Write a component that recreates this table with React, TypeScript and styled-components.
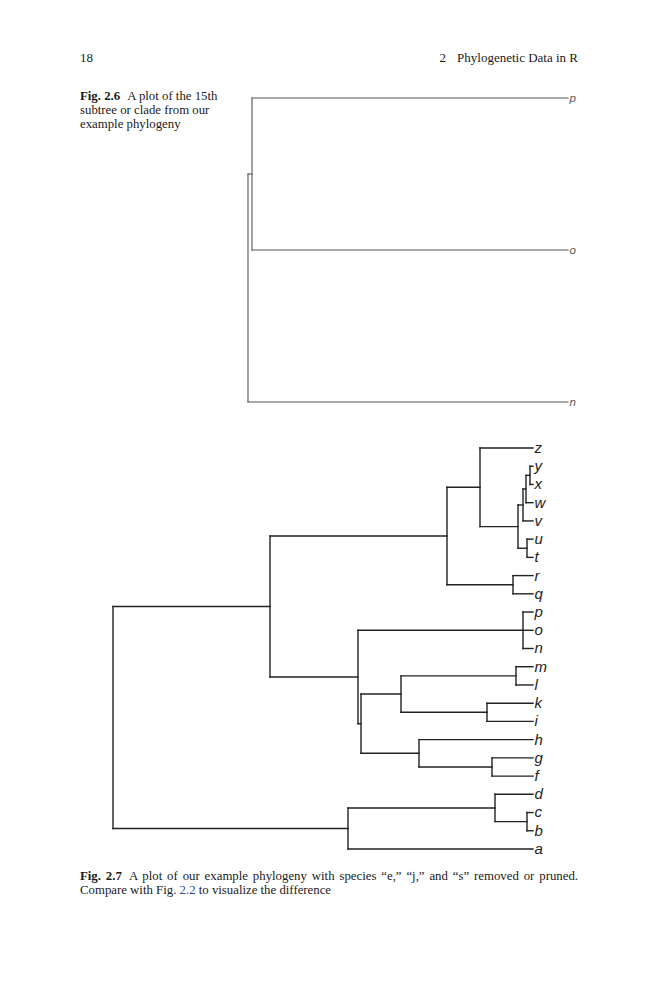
import React from "react";
import styled, { createGlobalStyle } from "styled-components";

const GlobalStyle = createGlobalStyle`
  body {
    margin: 0;
    background: #fff;
  }
`;

const Page = styled.div`
  width: 498px;
  padding: 50px 0 0 80px;
  font-family: "Liberation Serif", "Times New Roman", serif;
  color: #1a1a1a;
`;

const RunningHead = styled.header`
  display: flex;
  justify-content: space-between;
  font-size: 13px;
  line-height: 16px;
`;

const ChapterNo = styled.span`
  margin-right: 11px;
`;

const FigureRow = styled.div`
  display: flex;
  align-items: flex-start;
  margin-top: 23px;
`;

const Caption = styled.p<{ $width?: number; $justify?: boolean }>`
  margin: 0;
  width: ${(p) => (p.$width ? `${p.$width}px` : "auto")};
  flex-shrink: 0;
  font-size: 12.8px;
  line-height: 14px;
  text-align: ${(p) => (p.$justify ? "justify" : "left")};
`;

const FigLabel = styled.b`
  margin-right: 7px;
`;

const CrossRef = styled.span`
  color: #2b4ba3;
`;

const TreeSvg = styled.svg<{ $top?: number; $left?: number }>`
  display: block;
  flex-shrink: 0;
  margin-top: ${(p) => p.$top ?? 0}px;
  margin-left: ${(p) => p.$left ?? 0}px;
`;

const BottomCaption = styled(Caption)`
  margin-top: 9px;
`;

type TreeNode = { name?: string; x?: number; children?: TreeNode[] };

const tip = (name: string): TreeNode => ({ name });
const node = (x: number, children: TreeNode[]): TreeNode => ({ x, children });

interface Seg {
  x1: number;
  y1: number;
  x2: number;
  y2: number;
}

interface Label {
  name: string;
  x: number;
  y: number;
}

// walks the tree: tips get consecutive y slots, inner nodes sit between first and last child
function layoutTree(root: TreeNode, tipX: number, y0: number, step: number) {
  const segs: Seg[] = [];
  const labels: Label[] = [];
  let count = 0;

  const walk = (n: TreeNode): { x: number; y: number } => {
    if (!n.children) {
      const y = y0 + count * step;
      count += 1;
      labels.push({ name: n.name ?? "", x: tipX, y });
      return { x: tipX, y };
    }
    const x = n.x ?? 0;
    const kids = n.children.map(walk);
    const top = kids[0].y;
    const bottom = kids[kids.length - 1].y;
    segs.push({ x1: x, y1: top, x2: x, y2: bottom });
    kids.forEach((k) => segs.push({ x1: x, y1: k.y, x2: k.x, y2: k.y }));
    return { x, y: (top + bottom) / 2 };
  };

  walk(root);
  return { segs, labels };
}

interface PhyloProps {
  tree: TreeNode;
  tipX: number;
  y0: number;
  step: number;
  viewBox: [number, number, number, number];
  stroke: string;
  strokeWidth: number;
  fontSize: number;
  top?: number;
  left?: number;
}

const Phylogeny = ({ tree, tipX, y0, step, viewBox, stroke, strokeWidth, fontSize, top, left }: PhyloProps) => {
  const { segs, labels } = layoutTree(tree, tipX, y0, step);
  return (
    <TreeSvg
      width={viewBox[2]}
      height={viewBox[3]}
      viewBox={viewBox.join(" ")}
      $top={top}
      $left={left}
    >
      <g stroke={stroke} strokeWidth={strokeWidth} strokeLinecap="square" fill="none">
        {segs.map((s, i) => (
          <line key={i} x1={s.x1} y1={s.y1} x2={s.x2} y2={s.y2} />
        ))}
      </g>
      <g
        fill={stroke}
        fontFamily="'Liberation Sans', Arial, sans-serif"
        fontStyle="italic"
        fontSize={fontSize}
      >
        {labels.map((l) => (
          <text key={l.name} x={l.x + 1.5} y={l.y + fontSize * 0.33}>
            {l.name}
          </text>
        ))}
      </g>
    </TreeSvg>
  );
};

const subtree: TreeNode = node(248, [node(252, [tip("p"), tip("o")]), tip("n")]);

const pruned: TreeNode = node(113, [
  node(270, [
    node(447, [
      node(480, [
        tip("z"),
        node(518, [
          node(523, [node(526, [node(530, [tip("y"), tip("x")]), tip("w")]), tip("v")]),
          node(527, [tip("u"), tip("t")]),
        ]),
      ]),
      node(513, [tip("r"), tip("q")]),
    ]),
    node(358, [
      node(523, [tip("p"), tip("o"), tip("n")]),
      node(361, [
        node(401, [node(516, [tip("m"), tip("l")]), node(487, [tip("k"), tip("i")])]),
        node(419, [tip("h"), node(492, [tip("g"), tip("f")])]),
      ]),
    ]),
  ]),
  node(348, [node(495, [tip("d"), node(527, [tip("c"), tip("b")])]), tip("a")]),
]);

const App = () => (
  <>
    <GlobalStyle />
    <Page>
      <RunningHead>
        <span>18</span>
        <span>
          <ChapterNo>2</ChapterNo>Phylogenetic Data in R
        </span>
      </RunningHead>

      <FigureRow>
        <Caption $width={166}>
          <FigLabel>Fig. 2.6</FigLabel>A plot of the 15th subtree or clade from our example phylogeny
        </Caption>
        <Phylogeny
          tree={subtree}
          tipX={568}
          y0={98}
          step={152}
          viewBox={[246, 89, 338, 322]}
          stroke="#555"
          strokeWidth={1.1}
          fontSize={11.5}
        />
      </FigureRow>

      <Phylogeny
        tree={pruned}
        tipX={533}
        y0={448}
        step={401 / 22}
        viewBox={[100, 438, 460, 422]}
        stroke="#222"
        strokeWidth={1.4}
        fontSize={15}
        top={27}
        left={20}
      />

      <BottomCaption $width={498} $justify>
        <FigLabel>Fig. 2.7</FigLabel>A plot of our example phylogeny with species “e,” “j,” and “s” removed or
        pruned. Compare with Fig. <CrossRef>2.2</CrossRef> to visualize the difference
      </BottomCaption>
    </Page>
  </>
);

export default App;
